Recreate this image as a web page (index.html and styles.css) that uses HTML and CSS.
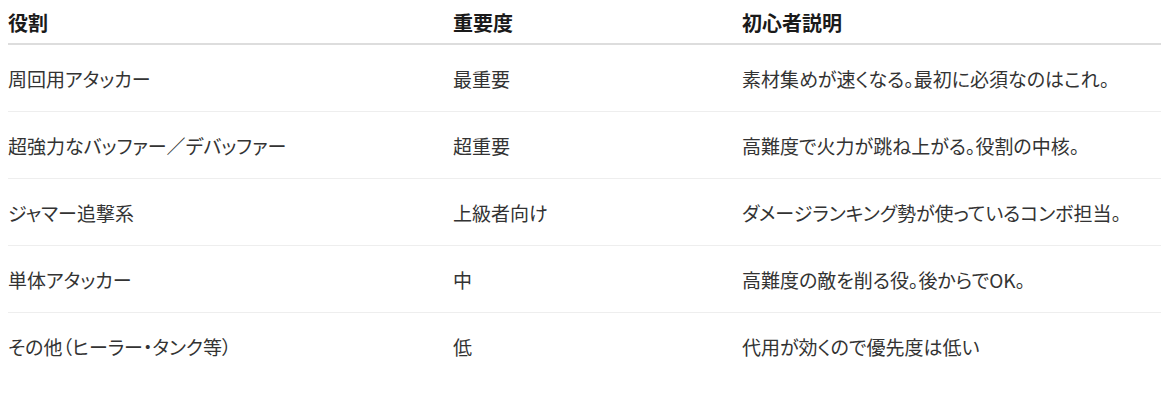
FILE: index.html
```html
<!DOCTYPE html>
<html lang="ja">
<head>
<meta charset="utf-8">
<link rel="stylesheet" href="styles.css">
</head>
<body>
<table class="roles">
  <thead>
    <tr><th class="c1">役割</th><th class="c2">重要度</th><th class="c3">初心者説明</th></tr>
  </thead>
  <tbody>
    <tr><td>周回用アタッカー</td><td>最重要</td><td>素材集めが速くなる。最初に必須なのはこれ。</td></tr>
    <tr><td>超強力なバッファー／デバッファー</td><td>超重要</td><td>高難度で火力が跳ね上がる。役割の中核。</td></tr>
    <tr><td>ジャマー追撃系</td><td>上級者向け</td><td>ダメージランキング勢が使っているコンボ担当。</td></tr>
    <tr><td>単体アタッカー</td><td>中</td><td>高難度の敵を削る役。後からでOK。</td></tr>
    <tr><td>その他（ヒーラー・タンク等）</td><td>低</td><td>代用が効くので優先度は低い</td></tr>
  </tbody>
</table>
</body>
</html>
```
FILE: styles.css
```css
html, body {
  margin: 0;
  padding: 0;
  background: #ffffff;
}
body {
  padding: 8px;
  font-family: "Noto Sans CJK JP", "Noto Sans", sans-serif;
  font-feature-settings: "palt";
  color: #222222;
}
.roles {
  width: 1153px;
  border-collapse: collapse;
  table-layout: fixed;
}
.roles th {
  font-size: 20px;
  font-weight: 700;
  line-height: 30px;
  text-align: left;
  padding: 0 0 5px 0;
  color: #1a1a1a;
  border-bottom: 2px solid #dddddd;
}
.roles .c1 { width: 445px; }
.roles .c2 { width: 289px; }
.roles td {
  font-size: 19px;
  font-weight: 400;
  line-height: 30px;
  padding: 19px 0 17px 0;
  color: #333333;
  border-bottom: 1px solid #eeeeee;
  vertical-align: middle;
}
.roles tbody tr:last-child td {
  border-bottom: none;
}
```
